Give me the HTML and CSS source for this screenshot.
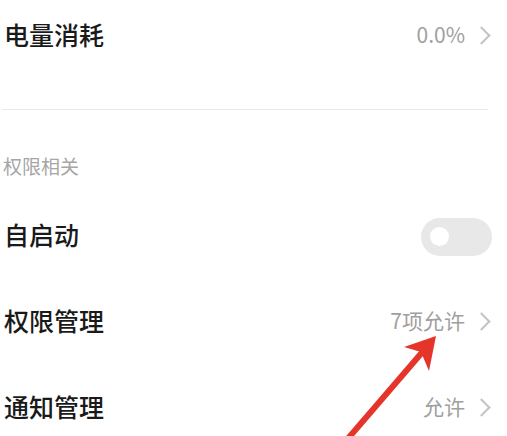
FILE: index.html
```html
<!DOCTYPE html>
<html lang="zh-CN">
<head>
    <meta charset="UTF-8">
    <meta name="viewport" content="width=device-width, initial-scale=1.0">
    <title>应用信息</title>
    <link rel="stylesheet" href="styles.css">
</head>
<body>
    <div class="page">
        <div class="row row-first">
            <span class="row-title">电量消耗</span>
            <span class="row-value">0.0%<span class="chevron"></span></span>
        </div>
        <div class="divider"></div>

        <div class="section-title">权限相关</div>

        <div class="row">
            <span class="row-title">自启动</span>
            <span class="switch"><span class="knob"></span></span>
        </div>
        <div class="row">
            <span class="row-title">权限管理</span>
            <span class="row-value">7项允许<span class="chevron"></span></span>
        </div>
        <div class="row">
            <span class="row-title">通知管理</span>
            <span class="row-value">允许<span class="chevron"></span></span>
        </div>

        <!-- annotation arrow -->
        <svg class="arrow" width="507" height="436" viewBox="0 0 507 436">
            <line x1="345" y1="442" x2="425" y2="349" stroke="#e5352b" stroke-width="6" stroke-linecap="round"/>
            <polygon points="436,336 404,347 421,352 429,371" fill="#e5352b"/>
        </svg>
    </div>
</body>
</html>
```

FILE: styles.css
```css
body {
    margin: 0;
    background: #fff;
    font-family: "Noto Sans CJK SC", "Noto Sans", sans-serif;
    overflow: hidden;
}
.page {
    position: relative;
    width: 507px;
    height: 436px;
    overflow: hidden;
}
.row {
    box-sizing: border-box;
    display: flex;
    align-items: center;
    justify-content: space-between;
    height: 86px;
    padding: 0 15px 6px 4px;
}
.row-first {
    height: 74px;
}
.row-title {
    font-size: 25px;
    font-weight: 500;
    color: #1a1a1a;
}
.row-value {
    display: flex;
    align-items: center;
    font-size: 21px;
    color: #a0a0a0;
}
.chevron {
    display: inline-block;
    width: 11px;
    height: 11px;
    border-top: 2px solid #c4c4c4;
    border-right: 2px solid #c4c4c4;
    transform: rotate(45deg);
    margin: 3px 4px 0 10px;
}
.divider {
    height: 1px;
    background: #e9e9e9;
    margin: 35px 19px 0 2px;
}
.section-title {
    font-size: 19px;
    line-height: 24px;
    color: #a6a6a6;
    padding: 44px 0 16px 3px;
}
.switch {
    display: flex;
    align-items: center;
    width: 71px;
    height: 38px;
    border-radius: 19px;
    background: #e8e8e8;
    margin-top: 5px;
}
.knob {
    width: 19px;
    height: 19px;
    border-radius: 50%;
    background: #fff;
    margin-left: 9px;
}
.arrow {
    position: absolute;
    left: 0;
    top: 0;
}
```
